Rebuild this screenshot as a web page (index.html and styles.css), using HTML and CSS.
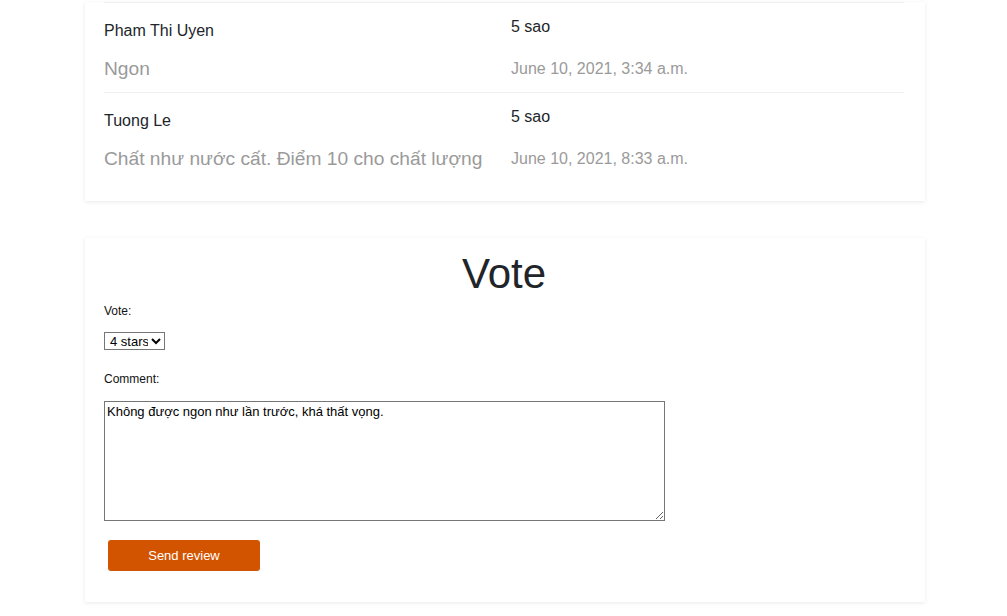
FILE: index.html
```html
<!DOCTYPE html>
<html lang="vi">
<head>
<meta charset="utf-8">
<title>Reviews</title>
<link rel="stylesheet" href="styles.css">
</head>
<body>
<div class="page">
  <section class="card reviews">
    <div class="review">
      <div class="col-left">
        <div class="name">Pham Thi Uyen</div>
        <div class="comment">Ngon</div>
      </div>
      <div class="col-right">
        <div class="rating">5 sao</div>
        <div class="date">June 10, 2021, 3:34 a.m.</div>
      </div>
    </div>
    <div class="review">
      <div class="col-left">
        <div class="name">Tuong Le</div>
        <div class="comment">Chất như nước cất. Điểm 10 cho chất lượng</div>
      </div>
      <div class="col-right">
        <div class="rating">5 sao</div>
        <div class="date">June 10, 2021, 8:33 a.m.</div>
      </div>
    </div>
  </section>

  <section class="card vote">
    <h1 class="vote-title">Vote</h1>
    <form class="vote-form">
      <label class="field-label" for="stars">Vote:</label>
      <select id="stars" class="stars">
        <option>1 star</option>
        <option>2 stars</option>
        <option>3 stars</option>
        <option selected>4 stars</option>
        <option>5 stars</option>
      </select>
      <label class="field-label comment-label" for="comment">Comment:</label>
      <textarea id="comment" class="comment-box">Không được ngon như lần trước, khá thất vọng.</textarea>
      <button type="button" class="send">Send review</button>
    </form>
  </section>
</div>
</body>
</html>
```

FILE: styles.css
```css
html, body {
  margin: 0;
  padding: 0;
  background: #ffffff;
}

body {
  font-family: "Liberation Sans", Arial, sans-serif;
  color: #212529;
}

.page {
  width: 840px;
  margin-left: 85px;
  padding-top: 2px;
  padding-bottom: 12px;
}

.card {
  background: #fff;
  box-shadow: 0 1px 4px rgba(0, 0, 0, 0.09);
  padding: 0 21px 0 19px;
}

.reviews {
  padding-bottom: 19px;
}

.review {
  display: grid;
  grid-template-columns: 407px 1fr;
  border-top: 1px solid #efefef;
  padding-bottom: 8px;
}

.col-left {
  padding-top: 16px;
}

.col-right {
  padding-top: 12px;
}

.name {
  font-size: 16px;
  line-height: 24px;
  color: #212529;
}

.comment {
  font-size: 19.2px;
  line-height: 30px;
  margin-top: 11px;
  color: #9a9a9a;
}

.rating {
  font-size: 16px;
  line-height: 24px;
  color: #212529;
}

.date {
  font-size: 16px;
  line-height: 24px;
  margin-top: 18px;
  color: #9a9a9a;
}

.vote {
  margin-top: 37px;
  padding-top: 11px;
  padding-bottom: 31px;
}

.vote-title {
  margin: 0;
  text-align: center;
  font-size: 42px;
  line-height: 50px;
  font-weight: 400;
  color: #212529;
}

.vote-form {
  display: flex;
  flex-direction: column;
  align-items: flex-start;
}

.field-label {
  display: block;
  font-size: 12px;
  line-height: 14px;
  margin-top: 5px;
  color: #111;
}

.comment-label {
  margin-top: 22px;
}

.stars {
  margin-top: 14px;
  width: 61px;
  height: 18px;
  font-family: "Liberation Sans", Arial, sans-serif;
  font-size: 13px;
  padding: 0 0 0 1px;
  border: 1px solid #767676;
  border-radius: 0;
  background: #fff;
  color: #000;
}

.comment-box {
  display: block;
  margin-top: 15px;
  box-sizing: border-box;
  width: 561px;
  height: 120px;
  padding: 2px;
  border: 1px solid #767676;
  font-family: "Liberation Sans", Arial, sans-serif;
  font-size: 13px;
  line-height: 15px;
  color: #000;
}

.send {
  margin: 19px 0 0 4px;
  width: 152px;
  height: 31px;
  border: none;
  border-radius: 3px;
  background: #d35400;
  color: #fff;
  font-family: "Liberation Sans", Arial, sans-serif;
  font-size: 13px;
  cursor: pointer;
}
```
